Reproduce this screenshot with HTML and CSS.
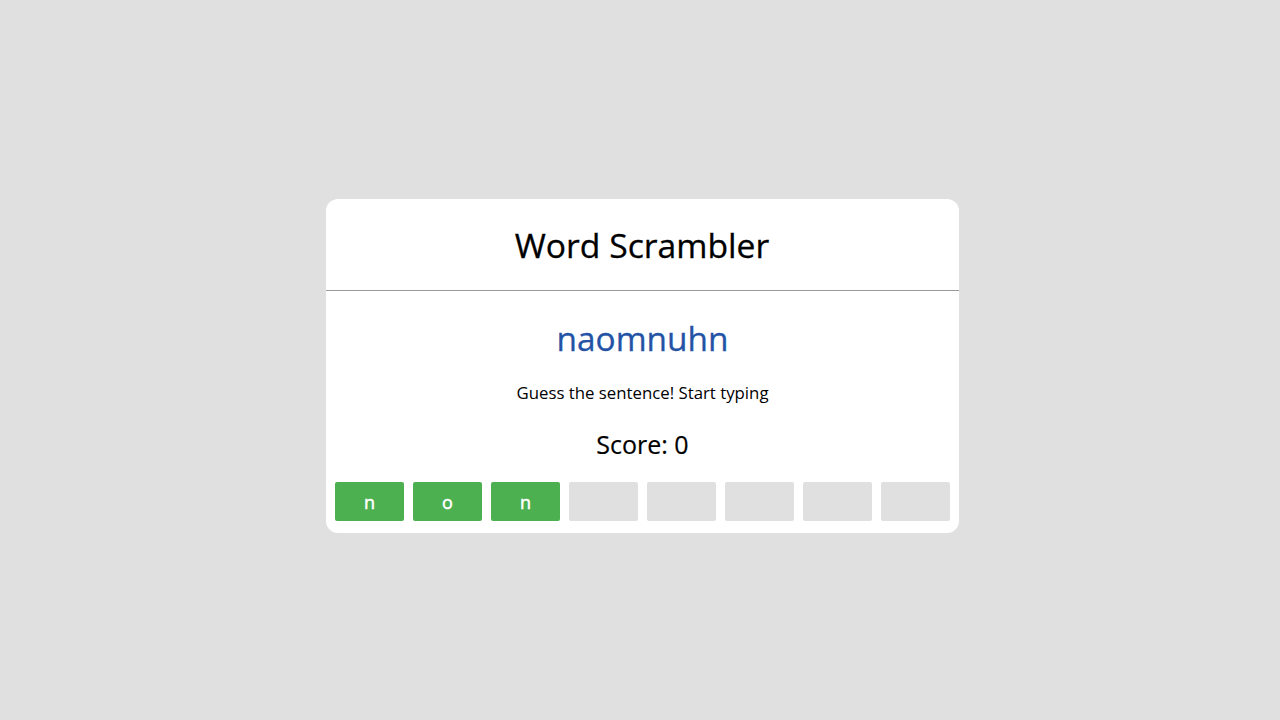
FILE: index.html
```html
<!DOCTYPE html>
<html>
<head>
<meta charset="utf-8">
<link rel="stylesheet" href="styles.css">
</head>
<body>
<div class="card">
  <div class="header"><h1 class="title">Word Scrambler</h1></div>
  <div class="body">
    <div class="scrambled">naomnuhn</div>
    <p class="hint">Guess the sentence! Start typing</p>
    <div class="score">Score: 0</div>
    <div class="tiles">
      <div class="tile filled">n</div>
      <div class="tile filled">o</div>
      <div class="tile filled">n</div>
      <div class="tile"></div>
      <div class="tile"></div>
      <div class="tile"></div>
      <div class="tile"></div>
      <div class="tile"></div>
    </div>
  </div>
</div>
</body>
</html>
```
FILE: styles.css
```css
html, body {
  margin: 0;
  height: 100%;
}
body {
  background: #e0e0e0;
  font-family: "Open Sans", "Noto Sans", sans-serif;
  display: flex;
  align-items: center;
  justify-content: center;
  box-sizing: border-box;
  padding: 12px 0 0 4px;
}
.card {
  width: 633px;
  box-sizing: border-box;
  background: #fff;
  border-radius: 12px;
  padding-bottom: 12px;
}
.header {
  height: 91px;
  display: flex;
  align-items: center;
  justify-content: center;
  border-bottom: 1px solid #9a9a9a;
}
.title {
  margin: 0;
  font-size: 33.7px;
  font-weight: 400;
  color: #000;
  -webkit-text-stroke: 0.3px #000;
}
.body {
  display: flex;
  flex-direction: column;
  align-items: center;
  padding: 0 8px 0 9px;
}
.scrambled {
  margin-top: 25px;
  font-size: 33.4px;
  line-height: 44px;
  color: #2453a6;
  -webkit-text-stroke: 0.3px #2453a6;
}
.hint {
  margin: 21px 0 0;
  font-size: 16.8px;
  line-height: 24px;
  color: #000;
}
.score {
  margin-top: 22px;
  font-size: 25px;
  line-height: 34px;
  color: #000;
  -webkit-text-stroke: 0.2px #000;
}
.tiles {
  margin-top: 21px;
  display: flex;
  gap: 9px;
}
.tile {
  width: 69px;
  height: 39px;
  border-radius: 2px;
  background: #e0e0e0;
  color: #fff;
  font-size: 18px;
  font-weight: 400;
  -webkit-text-stroke: 0.5px #fff;
  display: flex;
  align-items: center;
  justify-content: center;
}
.tile.filled {
  background: #4caf50;
}
```
